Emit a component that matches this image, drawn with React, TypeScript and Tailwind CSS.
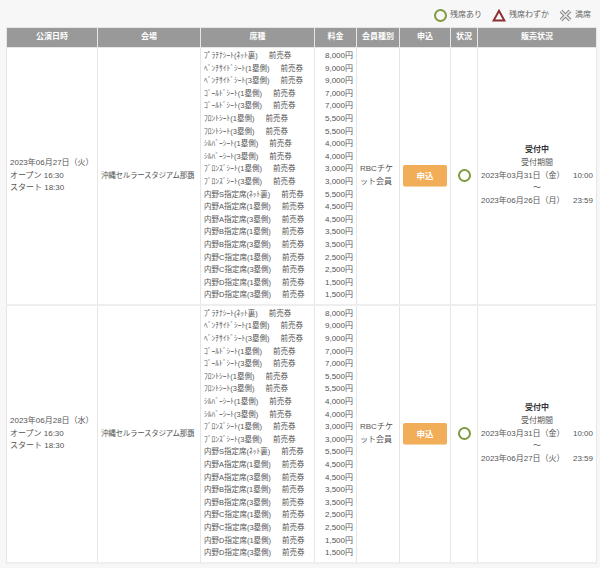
const seats = [
  ["ﾌﾟﾗﾁﾅｼｰﾄ(ﾈｯﾄ裏)", "8,000円"],
  ["ﾍﾞﾝﾁｻｲﾄﾞｼｰﾄ(1塁側)", "9,000円"],
  ["ﾍﾞﾝﾁｻｲﾄﾞｼｰﾄ(3塁側)", "9,000円"],
  ["ｺﾞｰﾙﾄﾞｼｰﾄ(1塁側)", "7,000円"],
  ["ｺﾞｰﾙﾄﾞｼｰﾄ(3塁側)", "7,000円"],
  ["ﾌﾛﾝﾄｼｰﾄ(1塁側)", "5,500円"],
  ["ﾌﾛﾝﾄｼｰﾄ(3塁側)", "5,500円"],
  ["ｼﾙﾊﾞｰｼｰﾄ(1塁側)", "4,000円"],
  ["ｼﾙﾊﾞｰｼｰﾄ(3塁側)", "4,000円"],
  ["ﾌﾞﾛﾝｽﾞｼｰﾄ(1塁側)", "3,000円"],
  ["ﾌﾞﾛﾝｽﾞｼｰﾄ(3塁側)", "3,000円"],
  ["内野S指定席(ﾈｯﾄ裏)", "5,500円"],
  ["内野A指定席(1塁側)", "4,500円"],
  ["内野A指定席(3塁側)", "4,500円"],
  ["内野B指定席(1塁側)", "3,500円"],
  ["内野B指定席(3塁側)", "3,500円"],
  ["内野C指定席(1塁側)", "2,500円"],
  ["内野C指定席(3塁側)", "2,500円"],
  ["内野D指定席(1塁側)", "1,500円"],
  ["内野D指定席(3塁側)", "1,500円"],
];

const shows = [
  { date: "2023年06月27日（火）", from: "2023年03月31日（金）", to: "2023年06月26日（月）" },
  { date: "2023年06月28日（水）", from: "2023年03月31日（金）", to: "2023年06月27日（火）" },
];

const headers = ["公演日時", "会場", "席種", "料金", "会員種別", "申込", "状況", "販売状況"];
const td = "border border-[#e6e6e6] bg-white align-middle";

export default function App() {
  return (
    <div className="h-[568px] w-[600px] overflow-hidden bg-[#f7f7f7] font-['Liberation_Sans','Noto_Sans_CJK_JP',sans-serif] text-[8px] leading-[12.6px] text-[#555]">
      <div className="flex h-[27px] items-center justify-end gap-[10px] pr-[9px] pt-[3px] text-[8px] text-[#666]">
        <div className="flex items-center gap-[3px]">
          <span className="h-[13px] w-[13px] rounded-full border-2 border-[#7f9a3e]" />
          残席あり
        </div>
        <div className="flex items-center gap-[3px]">
          <svg width="14" height="13" viewBox="0 0 14 13">
            <path d="M7 1.8 12.4 11.6H1.6Z" fill="none" stroke="#8e2f33" strokeWidth="2" />
          </svg>
          残席わずか
        </div>
        <div className="flex items-center gap-[3px]">
          <svg width="13" height="13" viewBox="0 0 13 13">
            <path d="M2 2 11 11M11 2 2 11" stroke="#888" strokeWidth="3.8" fill="none" />
            <path d="M2 2 11 11M11 2 2 11" stroke="#e8e8e8" strokeWidth="1.6" fill="none" />
          </svg>
          満席
        </div>
      </div>
      <table className="ml-[6px] w-[590px] table-fixed border-collapse">
        <colgroup>
          <col className="w-[91px]" />
          <col className="w-[103px]" />
          <col className="w-[114px]" />
          <col className="w-[42px]" />
          <col className="w-[43px]" />
          <col className="w-[51px]" />
          <col className="w-[27px]" />
          <col className="w-[119px]" />
        </colgroup>
        <thead>
          <tr>
            {headers.map((h) => (
              <th key={h} className="h-[20px] border border-[#e6e6e6] bg-[#999] p-0 text-center text-[8px] font-bold text-white">
                {h}
              </th>
            ))}
          </tr>
        </thead>
        <tbody>
          {shows.map((s) => (
            <tr key={s.date} className="border-b-2 border-[#eee]">
              <td className={`${td} whitespace-nowrap px-[3px]`}>
                <div>{s.date}</div>
                <div>オープン 16:30</div>
                <div>スタート 18:30</div>
              </td>
              <td className={`${td} whitespace-nowrap px-[3px] text-[7.5px] tracking-[-0.25px]`}>沖縄セルラースタジアム那覇</td>
              <td className={`${td} whitespace-nowrap px-[3px] py-[2px] text-[7.5px]`}>
                {seats.map(([name]) => (
                  <div key={name}>
                    {name}
                    <span className="ml-[11px]">前売券</span>
                  </div>
                ))}
              </td>
              <td className={`${td} whitespace-nowrap px-[3px] py-[2px] text-right`}>
                {seats.map(([name, price]) => (
                  <div key={name}>{price}</div>
                ))}
              </td>
              <td className={`${td} whitespace-nowrap px-[3px]`}>
                RBCチケ
                <br />
                ット会員
              </td>
              <td className={`${td} px-[3px]`}>
                <button className="h-[21px] w-full rounded-[2px] bg-[#f2ad58] text-[8.5px] font-bold text-white shadow-[0_1px_0_#f5d3a5]">
                  申込
                </button>
              </td>
              <td className={td}>
                <div className="mx-auto h-[13px] w-[13px] rounded-full border-2 border-[#7f9a3e]" />
              </td>
              <td className={`${td} px-[3px] text-center`}>
                <div className="font-bold text-[#333]">受付中</div>
                <div>受付期間</div>
                <div className="flex justify-between whitespace-nowrap">
                  <span>{s.from}</span>
                  <span>10:00</span>
                </div>
                <div>～</div>
                <div className="flex justify-between whitespace-nowrap">
                  <span>{s.to}</span>
                  <span>23:59</span>
                </div>
              </td>
            </tr>
          ))}
        </tbody>
      </table>
    </div>
  );
}
